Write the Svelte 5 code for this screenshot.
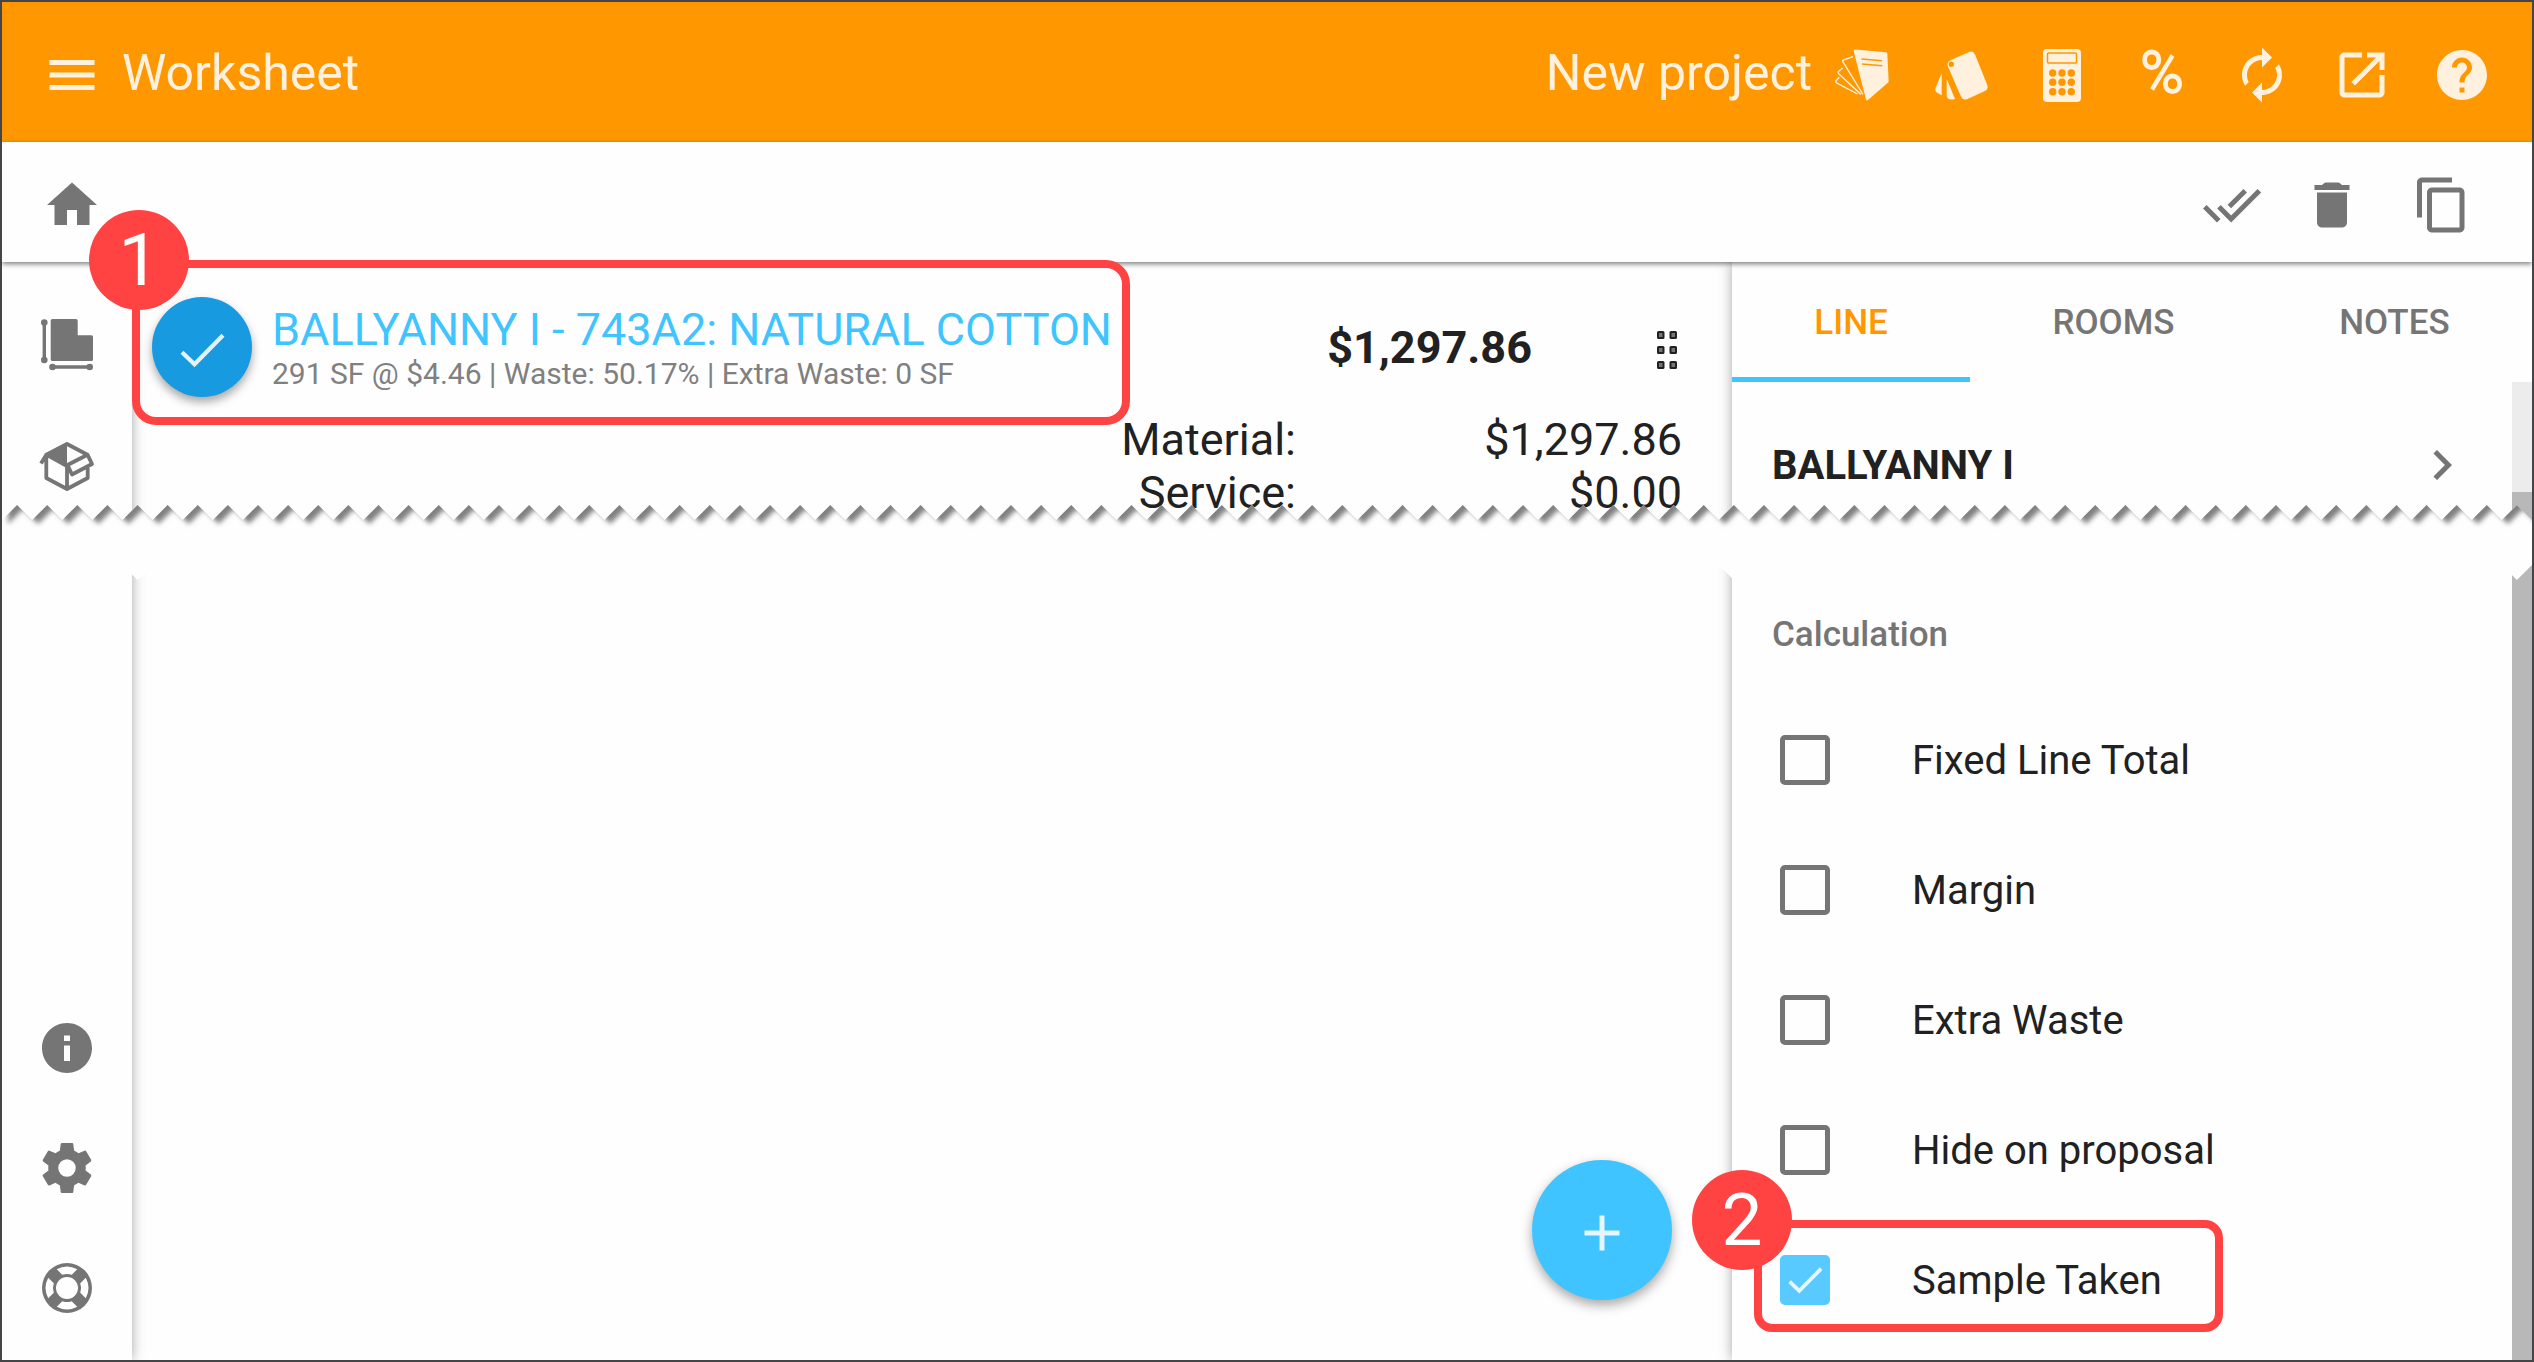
<script>
    import { writable } from 'svelte/store'

    const tabs = ['LINE', 'ROOMS', 'NOTES'];
    const activeTab = writable('LINE');

    const options = writable([
        { id: 'fixed', label: 'Fixed Line Total', checked: false },
        { id: 'margin', label: 'Margin', checked: false },
        { id: 'waste', label: 'Extra Waste', checked: false },
        { id: 'hide', label: 'Hide on proposal', checked: false },
        { id: 'sample', label: 'Sample Taken', checked: true, step: 2 },
    ]);

    const totals = [
        { label: 'Material:', amount: '$1,297.86' },
        { label: 'Service:', amount: '$0.00' },
    ];

    const home = 'M10 20v-6h4v6h5v-8h3L12 3 2 12h3v8z';
    const check = 'M4 12.900L9 17.700L20.400 6.100';

    const toolActions = [
        { name: 'Select all', d: 'M18 7l-1.41-1.41-6.34 6.34 1.41 1.41L18 7zm4.24-1.41L11.66 16.17 7.48 12l-1.41 1.41L11.66 19l12-12-1.42-1.41zM.41 13.41L6 19l1.41-1.41L1.83 12 .41 13.41z' },
        { name: 'Delete', d: 'M6 19c0 1.1.9 2 2 2h8c1.1 0 2-.9 2-2V7H6v12zM19 4h-3l-.8-.7c-.2-.2-.5-.3-.8-.3H9.600c-.3 0-.6.1-.8.3L8 4H5v2h14V4z' },
        { name: 'Copy', d: 'M16 1H4c-1.1 0-2 .9-2 2v14h2V3h12V1zm3 4H8c-1.1 0-2 .9-2 2v14c0 1.1.9 2 2 2h11c1.1 0 2-.9 2-2V7c0-1.1-.9-2-2-2zm0 16H8V7h11v14z' },
    ];

    const headerActions = [
        { name: 'Refresh', d: 'M12 6v3l4-4-4-4v3c-4.42 0-8 3.58-8 8 0 1.57.46 3.03 1.24 4.26L6.7 14.8c-.45-.83-.7-1.79-.7-2.8 0-3.31 2.69-6 6-6zm6.76 1.74L17.3 9.2c.44.84.7 1.79.7 2.8 0 3.31-2.69 6-6 6v-3l-4 4 4 4v-3c4.42 0 8-3.58 8-8 0-1.57-.46-3.03-1.24-4.26z' },
        { name: 'Open in new window', d: 'M19 19H5V5h7V3H5c-1.11 0-2 .9-2 2v14c0 1.1.89 2 2 2h14c1.1 0 2-.9 2-2v-7h-2v7zM14 3v2h3.59l-9.83 9.83 1.41 1.41L19 6.41V10h2V3h-7z' },
        { name: 'Help', d: 'M12 2C6.48 2 2 6.48 2 12s4.48 10 10 10 10-4.48 10-10S17.52 2 12 2zm1 17h-2v-2h2v2zm2.07-7.75l-.9.92C13.45 12.9 13 13.5 13 15h-2v-.5c0-1.1.45-2.1 1.17-2.83l1.24-1.26c.37-.36.59-.86.59-1.41 0-1.1-.9-2-2-2s-2 .9-2 2H8c0-2.210 1.79-4 4-4s4 1.790 4 4c0 .88-.36 1.680-.93 2.25z' },
    ];

    // torn strip between the two halves of the page
    const tooth = 30;
    const teeth = 84;
    const zig = (y) => {
        let pts = '';
        for (let i = 0; i <= teeth; i++) {
            pts += `L${i * tooth} ${y + 15}L${i * tooth + 15} ${y}`;
        }
        return pts;
    };
    const upper = `M0 -30${zig(10)}L${teeth * tooth + 30} -30Z`;
    const band = `M0 25${zig(10)}L2535 86${[...Array(teeth + 1).keys()].reverse().map((i) => `L${i * tooth + 15} 85L${i * tooth} 70`).join('')}Z`;
</script>

<div class="app">
    <header class="header">
        <button class="icon" aria-label="Menu">
            <svg viewBox="0 0 24 24"><path d="M3 18h18v-2H3v2zm0-5h18v-2H3v2zm0-7v2h18V6H3z" /></svg>
        </button>
        <h1>Worksheet</h1>
        <span class="project">New project</span>
        <nav class="header-actions">
            <button class="icon" aria-label="Documents">
                <svg viewBox="0 0 60 60">
                    <path d="M23 4.500L54 7.200Q55.200 7.400 55.300 8.500L56.700 37L36 55Q34.500 56 34 54.500L21.700 6Q21.600 4.500 23 4.500Z" />
                    <path class="cut" d="M29.500 14L50 15.700M30 19L50.300 20.700" />
                    <path class="sheets" d="M21 11.700L11.500 15Q10 15.700 11 17L31 49.500M10.700 23L6.500 26.500Q5.500 27.700 6.700 28.700L29 49.500M7.300 32.300L4 35.700Q3.300 37 4.500 37.800L25.500 49" />
                </svg>
            </button>
            <button class="icon" aria-label="Swatches">
                <svg viewBox="0 0 60 60">
                    <path fill-rule="evenodd" d="M19 15L37 7Q41 5.500 43 9.500L55.300 40Q56.500 44 53 46L35.500 54Q31 56 29 51.500L15.700 21Q14.500 17 19 15ZM22 19.300A2.700 2.700 0 1 0 16.600 19.300A2.700 2.700 0 1 0 22 19.300Z" />
                    <path d="M9.700 28V50.300L5 47.700Q2.700 46 3.500 43ZM14.700 33.700L23 54Q14.700 56 14.700 50Z" />
                </svg>
            </button>
            <button class="icon" aria-label="Calculator">
                <svg viewBox="0 0 60 60">
                    <rect x="11" y="4" width="38" height="53" rx="4" />
                    <rect class="cut" x="15.500" y="8" width="29" height="10" rx="1" />
                    {#each [20.7, 30, 39.3] as x}
                        {#each [28, 37.3, 46.7] as y}
                            <circle class="hole" cx={x} cy={y} r="3.700" />
                        {/each}
                    {/each}
                </svg>
            </button>
            <button class="icon" aria-label="Percent">
                <svg viewBox="0 0 60 60">
                    <g class="bold">
                        <rect x="12.700" y="7" width="14" height="15.500" rx="6.800" />
                        <rect x="33.500" y="31" width="14" height="15.500" rx="6.800" />
                    </g>
                    <path class="slash" d="M40.500 10.500L20 44.500" />
                </svg>
            </button>
            {#each headerActions as action}
                <button class="icon" aria-label={action.name}>
                    <svg viewBox="0 0 24 24"><path d={action.d} /></svg>
                </button>
            {/each}
        </nav>
    </header>

    <div class="toolbar">
        <a class="icon" href="#home" aria-label="Home">
            <svg viewBox="0 0 24 24"><path d={home} /></svg>
        </a>
        <div class="toolbar-actions">
            {#each toolActions as action}
                <button class="icon" aria-label={action.name}>
                    <svg viewBox="0 0 24 24"><path d={action.d} /></svg>
                </button>
            {/each}
        </div>
    </div>

    <div class="body">
        <nav class="sidebar">
            <a class="icon" href="#rooms" aria-label="Floor plan">
                <svg viewBox="0 0 60 60">
                    <path d="M15.500 4H39Q40.700 4 40.700 5.700V20.300H54.500Q56 20.300 56 22V44.500Q56 46 54.500 46H15.500Q13.700 46 13.700 44.500V5.700Q13.700 4 15.500 4Z" />
                    <path class="measure" d="M7.300 7.500V45M15.500 52H52.700" />
                    <circle cx="7.300" cy="7.500" r="3.300" />
                    <circle cx="7.300" cy="45" r="3.300" />
                    <circle cx="15.500" cy="52" r="3.300" />
                    <circle cx="52.700" cy="52" r="3.300" />
                </svg>
            </a>
            <a class="icon" href="#products" aria-label="Products">
                <svg viewBox="0 -1 60 60">
                    <path d="M30 8L9.500 19L30 30Z" />
                    <path class="box" d="M4 27.500L9.300 18.700L30 8L50.500 18.700L30.500 29L35 38.500L55 28L50.500 18.700M9.300 19V42L30 53L50.700 42V32M30 29V53M9.300 18.700L30 30" />
                </svg>
            </a>
            <a class="icon bottom" href="#info" aria-label="Info">
                <svg viewBox="0 0 24 24"><path d="M12 2C6.480 2 2 6.480 2 12s4.480 10 10 10 10-4.480 10-10S17.520 2 12 2zm1.200 15.200h-2.400V11h2.400v6.200zm0-8h-2.400V7h2.400v2.200z" /></svg>
            </a>
            <a class="icon" href="#settings" aria-label="Settings">
                <svg viewBox="0 0 24 24"><path d="M12,15.5A3.5,3.5 0 0,1 8.5,12A3.5,3.5 0 0,1 12,8.5A3.5,3.5 0 0,1 15.5,12A3.5,3.5 0 0,1 12,15.5M19.43,12.97C19.47,12.65 19.5,12.33 19.5,12C19.5,11.67 19.47,11.34 19.43,11L21.54,9.37C21.73,9.22 21.78,8.95 21.66,8.73L19.66,5.27C19.54,5.05 19.27,4.96 19.05,5.05L16.56,6.05C16.04,5.66 15.5,5.32 14.87,5.07L14.5,2.42C14.46,2.18 14.25,2 14,2H10C9.75,2 9.54,2.18 9.5,2.42L9.13,5.07C8.5,5.32 7.96,5.66 7.44,6.05L4.95,5.05C4.73,4.96 4.46,5.05 4.34,5.27L2.34,8.73C2.21,8.95 2.27,9.22 2.46,9.37L4.57,11C4.53,11.34 4.5,11.67 4.5,12C4.5,12.33 4.53,12.65 4.57,12.97L2.46,14.63C2.27,14.78 2.21,15.05 2.34,15.27L4.34,18.73C4.46,18.95 4.73,19.03 4.95,18.95L7.44,17.94C7.96,18.34 8.5,18.68 9.13,18.93L9.5,21.58C9.54,21.82 9.75,22 10,22H14C14.25,22 14.46,21.82 14.5,21.58L14.87,18.93C15.5,18.67 16.04,18.34 16.56,17.94L19.05,18.95C19.27,19.03 19.54,18.95 19.66,18.73L21.66,15.27C21.78,15.05 21.73,14.78 21.54,14.63L19.43,12.97Z" /></svg>
            </a>
            <a class="icon" href="#support" aria-label="Support">
                <svg viewBox="-12 -12 24 24">
                    <circle r="10" />
                    <circle class="window" r="4.400" />
                    {#each [0, 90, 180, 270] as angle}
                        <path class="window" transform="rotate({angle})" d="M-4.100 -7.500A8.600 8.600 0 0 1 4.100 -7.500L1.900 -5.300A5.600 5.600 0 0 0 -1.900 -5.300Z" />
                    {/each}
                </svg>
            </a>
        </nav>

        <main>
            <div class="line">
                <div class="line-product">
                    <button class="selected" aria-label="Selected">
                        <svg class="check" viewBox="0 0 24 24"><path d={check} /></svg>
                    </button>
                    <div>
                        <h2>BALLYANNY I - 743A2: NATURAL COTTON</h2>
                        <p>291 SF @ $4.46 | Waste: 50.17% | Extra Waste: 0 SF</p>
                    </div>
                    <div class="callout first"><span class="badge">1</span></div>
                </div>
                <strong class="price">$1,297.86</strong>
                <button class="drag" aria-label="Reorder">
                    <svg viewBox="0 0 20 38">
                        {#each [1, 13.5] as x}
                            {#each [1, 16, 31] as y}
                                <rect {x} {y} width="5.500" height="6" rx="0.500" />
                            {/each}
                        {/each}
                    </svg>
                </button>
            </div>
            <dl class="totals">
                {#each totals as total}
                    <dt>{total.label}</dt>
                    <dd>{total.amount}</dd>
                {/each}
            </dl>
            <button class="fab" aria-label="Add">
                <svg viewBox="0 0 24 24"><path d="M19 13h-6v6h-2v-6H5v-2h6V5h2v6h6v2z" /></svg>
            </button>
        </main>

        <aside class="panel">
            <div class="tabs" role="tablist">
                {#each tabs as tab}
                    <button role="tab" aria-selected={$activeTab === tab} class:active={$activeTab === tab} on:click={() => activeTab.set(tab)}>{tab}</button>
                {/each}
            </div>
            <div class="panel-body">
                <div class="panel-content">
                    <a class="product" href="#product">
                        <span>BALLYANNY I</span>
                        <svg viewBox="0 0 24 24"><path d="M10 6L8.590 7.410 13.170 12l-4.580 4.590L10 18l6-6z" /></svg>
                    </a>
                    <section>
                        <h3>Calculation</h3>
                        {#each $options as option}
                            <div class="option">
                                <span class="box-wrap">
                                    <input type="checkbox" id={option.id} bind:checked={option.checked} />
                                    <svg class="check" viewBox="0 0 24 24"><path d={check} /></svg>
                                </span>
                                <label for={option.id}>{option.label}</label>
                                {#if option.step}
                                    <div class="callout second"><span class="badge">{option.step}</span></div>
                                {/if}
                            </div>
                        {/each}
                    </section>
                </div>
                <div class="scroll"><div class="thumb"></div></div>
            </div>
        </aside>

        <svg class="tear" viewBox="0 0 2520 90" preserveAspectRatio="none">
            <defs>
                <clipPath id="band"><path d={band} /></clipPath>
                <filter id="soft" x="-5%" y="-50%" width="110%" height="200%"><feGaussianBlur stdDeviation="2.500" /></filter>
            </defs>
            <path class="paper" d={band} />
            <g clip-path="url(#band)">
                <path class="shade" d={upper} transform="translate(6 4)" filter="url(#soft)" />
            </g>
        </svg>
    </div>
</div>

<style>
    :global(body) {
        margin: 0;
        background-color: #fefefe;
        font-family: Roboto, "Liberation Sans", sans-serif;
        color: #212121;
    }

    .app {
        display: flex;
        flex-direction: column;
        min-height: 100vh;
        box-sizing: border-box;
        border: 2px solid #454547;
        overflow: hidden;
    }

    button {
        padding: 0;
        border: 0;
        background: none;
        font: inherit;
        color: inherit;
        cursor: pointer;
    }

    a {
        color: inherit;
        text-decoration: none;
    }

    h1, h2, h3, p, dl, dd {
        margin: 0;
    }

    svg {
        display: block;
        fill: currentColor;
    }

    .icon {
        display: block;
        flex: none;
        box-sizing: content-box;
        width: 60px;
        height: 60px;
        padding-top: 6px;
    }

    .icon svg {
        width: 60px;
        height: 60px;
    }

    .header {
        display: flex;
        align-items: center;
        height: 140px;
        padding: 0 40px;
        background-color: #ff9800;
        color: #fff1de;
        font-size: 50px;
    }

    h1 {
        margin-left: 20px;
        font-size: 50px;
        font-weight: 400;
    }

    h1, .project {
        padding-top: 2px;
    }

    .project {
        margin-left: auto;
    }

    .header-actions {
        display: flex;
        gap: 40px;
        margin-left: 20px;
    }

    .cut {
        fill: none;
        stroke: #ff9800;
        stroke-width: 1.5;
    }

    .hole {
        fill: #ff9800;
    }

    .sheets, .bold, .slash, .measure, .box {
        stroke: currentColor;
    }

    .sheets {
        fill: none;
        stroke-width: 1.4;
    }

    .bold {
        fill: none;
        stroke-width: 4.8;
    }

    .slash {
        stroke-width: 4.4;
    }

    .measure {
        stroke-width: 3.4;
    }

    .box {
        fill: none;
        stroke-width: 3.8;
        stroke-linejoin: round;
    }

    .check {
        fill: none;
        stroke: currentColor;
        stroke-width: 1.7;
    }

    .toolbar {
        position: relative;
        z-index: 3;
        display: flex;
        align-items: center;
        justify-content: space-between;
        height: 120px;
        padding: 0 60px 0 40px;
        background-color: #fefefe;
        color: #757575;
        box-shadow: 0 2px 5px rgba(0, 0, 0, 0.5);
    }

    .toolbar-actions {
        display: flex;
        gap: 40px;
    }

    .toolbar-actions .icon:last-child {
        margin-left: 10px;
    }

    .body {
        position: relative;
        flex: 1;
        display: flex;
    }

    .sidebar {
        position: relative;
        z-index: 1;
        display: flex;
        flex-direction: column;
        align-items: center;
        gap: 54px;
        width: 130px;
        box-sizing: border-box;
        padding: 47px 0 42px;
        color: #757575;
        background-color: #fefefe;
        box-shadow: 0 0 12px rgba(0, 0, 0, 0.35);
    }

    .sidebar .bottom {
        margin-top: auto;
    }

    .window {
        fill: #fefefe;
    }

    main {
        position: relative;
        z-index: 4;
        flex: 1;
        padding-right: 50px;
    }

    .line {
        display: flex;
        align-items: center;
        padding: 35px 0 16px 20px;
    }

    .line-product {
        position: relative;
        display: flex;
        align-items: center;
        gap: 20px;
    }

    .selected {
        width: 100px;
        height: 100px;
        padding: 6px 0 0 20px;
        border-radius: 50%;
        background-color: #179ae0;
        color: #e3f3fc;
        box-shadow: 0 5px 10px rgba(0, 0, 0, 0.35);
    }

    .selected svg, .fab svg {
        width: 60px;
        height: 60px;
    }

    h2 {
        font-size: 45px;
        font-weight: 400;
        line-height: 53px;
        color: #40c4ff;
    }

    p {
        font-size: 30px;
        line-height: 35px;
        color: #808080;
    }

    .price {
        margin-left: auto;
        font-size: 45px;
        font-weight: 700;
    }

    .drag {
        width: 20px;
        margin: 5px 5px 0 125px;
    }

    .drag svg {
        width: 20px;
        height: 38px;
        fill: #757575;
        stroke: #212121;
        stroke-width: 2;
    }

    .totals {
        display: grid;
        grid-template-columns: 1fr 386px;
        font-size: 45px;
        line-height: 53px;
        text-align: right;
    }

    .fab {
        position: absolute;
        right: 60px;
        bottom: 60px;
        width: 140px;
        height: 140px;
        padding: 6px 0 0 40px;
        border-radius: 50%;
        background-color: #40c4ff;
        color: #e4f6ff;
        box-shadow: 0 5px 12px rgba(0, 0, 0, 0.35);
    }

    .callout {
        position: absolute;
        border: 8px solid #ff4343;
        border-radius: 24px;
        pointer-events: none;
    }

    .first {
        top: -37px;
        bottom: -28px;
        left: -20px;
        right: -18px;
    }

    .second {
        top: 5px;
        bottom: 13px;
        left: -18px;
        right: 249px;
        border-radius: 18px;
    }

    .badge {
        position: absolute;
        top: -58px;
        left: -51px;
        width: 100px;
        border-radius: 50%;
        background-color: #ff4343;
        color: #fff;
        font-size: 73px;
        line-height: 100px;
        text-align: center;
    }

    .second .badge {
        left: -70px;
    }

    .panel {
        position: relative;
        z-index: 2;
        display: flex;
        flex-direction: column;
        width: 800px;
        background-color: #fefefe;
        box-shadow: 0 0 12px rgba(0, 0, 0, 0.35);
    }

    .tabs {
        display: flex;
        height: 120px;
    }

    .tabs button {
        flex: 1 1 auto;
        box-sizing: border-box;
        padding-top: 5px;
        border-bottom: 5px solid transparent;
        font-size: 35px;
        font-weight: 500;
        color: #757575;
    }

    .tabs .active {
        border-color: #40c4ff;
        color: #ff9800;
    }

    .panel-body {
        flex: 1;
        display: flex;
    }

    .panel-content {
        flex: 1;
    }

    .product {
        display: flex;
        align-items: center;
        justify-content: space-between;
        height: 166px;
        padding: 0 40px;
        font-size: 40px;
        font-weight: 700;
    }

    .product svg {
        width: 60px;
        height: 60px;
        fill: #757575;
    }

    section {
        padding: 66px 40px 0;
    }

    h3 {
        margin-bottom: 39px;
        font-size: 35px;
        font-weight: 500;
        line-height: 42px;
        color: #757575;
    }

    .option {
        position: relative;
        display: flex;
        align-items: center;
        gap: 82px;
        height: 130px;
        padding-left: 8px;
        font-size: 40px;
    }

    .option:last-child {
        margin-bottom: 15px;
    }

    .box-wrap {
        display: grid;
        place-items: center;
    }

    .box-wrap > * {
        grid-area: 1 / 1;
    }

    .box-wrap svg {
        width: 46px;
        height: 46px;
        color: #e8f7ff;
        stroke-width: 2;
        display: none;
        pointer-events: none;
    }

    input {
        appearance: none;
        width: 50px;
        height: 50px;
        margin: 0;
        box-sizing: border-box;
        border: 5px solid #757575;
        border-radius: 5px;
    }

    input:checked {
        border-color: #58caff;
        background-color: #58caff;
    }

    input:checked + svg {
        display: block;
    }

    .scroll {
        width: 20px;
        padding-top: 110px;
        box-sizing: border-box;
        display: flex;
        background-color: #ececec;
    }

    .thumb {
        flex: 1;
        background-color: #b8b8b8;
    }

    .tear {
        position: absolute;
        z-index: 5;
        top: 233px;
        left: 0;
        width: 100%;
        height: 90px;
        pointer-events: none;
    }

    .paper {
        fill: #fefefe;
    }

    .shade {
        fill: #808080;
    }
</style>
